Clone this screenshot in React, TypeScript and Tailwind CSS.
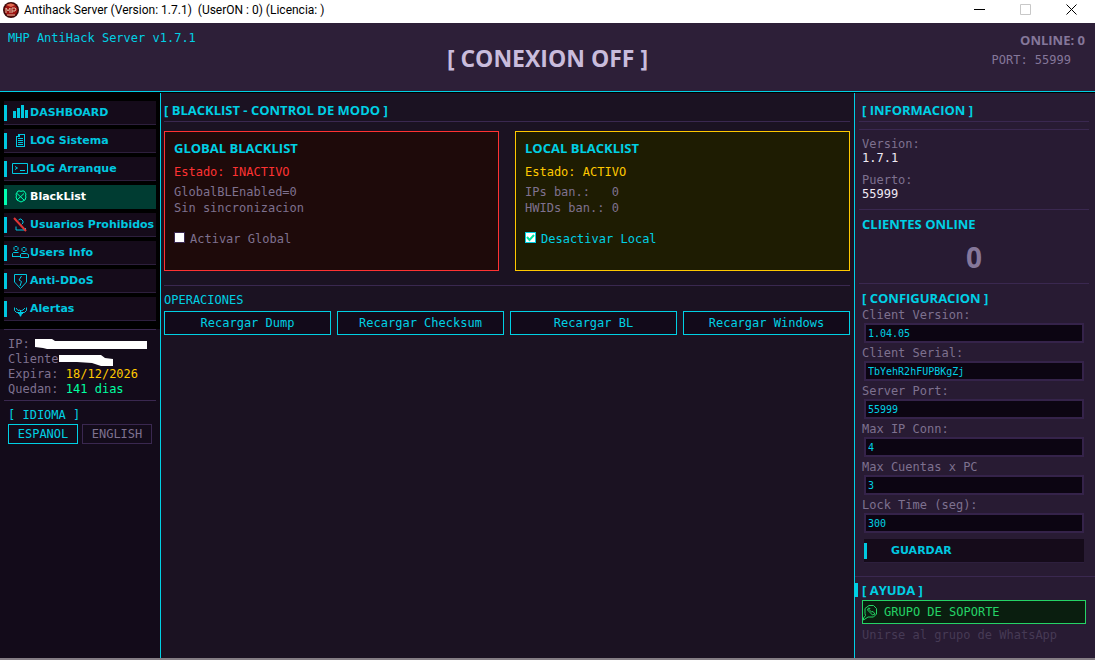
import React, { useState } from 'react';

const NAV_ITEMS = [
  { id: 'dashboard', label: 'DASHBOARD' },
  { id: 'log', label: 'LOG Sistema' },
  { id: 'boot', label: 'LOG Arranque' },
  { id: 'blacklist', label: 'BlackList' },
  { id: 'banned', label: 'Usuarios Prohibidos' },
  { id: 'users', label: 'Users Info' },
  { id: 'ddos', label: 'Anti-DDoS' },
  { id: 'alerts', label: 'Alertas' },
];

const CONFIG_FIELDS = [
  { id: 'clientVersion', label: 'Client Version:', value: '1.04.05' },
  { id: 'clientSerial', label: 'Client Serial:', value: 'TbYehR2hFUPBKgZj' },
  { id: 'serverPort', label: 'Server Port:', value: '55999' },
  { id: 'maxIp', label: 'Max IP Conn:', value: '4' },
  { id: 'maxAccounts', label: 'Max Cuentas x PC', value: '3' },
  { id: 'lockTime', label: 'Lock Time (seg):', value: '300' },
];

const OPERATIONS = ['Recargar Dump', 'Recargar Checksum', 'Recargar BL', 'Recargar Windows'];

const NavIcon: React.FC<{ id: string }> = ({ id }) => (
  <svg
    width="18"
    height="18"
    viewBox="0 0 18 18"
    fill="none"
    stroke="currentColor"
    strokeWidth="1"
    className="shrink-0"
    aria-hidden="true"
  >
    {id === 'dashboard' && (
      <path d="M1 7h3v7H1zM5 4h3v10H5zM9 1h3v13H9zM13 6h3v8h-3z" fill="currentColor" stroke="none" />
    )}
    {id === 'log' && (
      <path d="M6.500 2.500h6v12h-8v-10h2zM4.500 4.500h3v-2M6 6.500h5M6 8.500h5M6 10.500h5M6 12.500h5" shapeRendering="crispEdges" />
    )}
    {id === 'boot' && <path d="M.5 3.500h15v10H.5zM3 6.500l2.500 1.500L3 9.500M8 10.500h5" />}
    {id === 'blacklist' && (
      <path d="M6 3h2l1 .5 1-.5h2l2 3-.5 2 .5 1-1 3-2 1-2 1-2-1-2-1-1-3 .5-1-.5-2zM5 5.500l7 6.500M12 5.500L5 12" />
    )}
    {id === 'banned' && (
      <>
        <path d="M6.500 4l1.500-1h1l2 2v2L9.500 8.500M4 10.500v3.500h9.500v-2" />
        <path d="M2 2l12 13" stroke="#e03535" strokeWidth="2" />
      </>
    )}
    {id === 'users' && (
      <path d="M3 2.500h2l1 1v2l-1 1H3l-1-1v-2zM11 3.500h2l1 1v2l-1 1h-2l-1-1v-2zM.5 13V9.500l1-1h5M.5 12.500h8M8.500 13.500v-3l1-1h5l2 1v3z" />
    )}
    {id === 'ddos' && <path d="M2.500 2.500h12v7.500l-6 6.500-6-6.500zM9.500 4L7 8l2.500 1.500L8 14" />}
    {id === 'alerts' && (
      <>
        <path d="M2.500 7.500v3l2 2h8l2-2v-3M4 8l2 2.500 2-.5 1 1 2-1 2-2M8.500 10v3" />
        <path d="M6 12h5v2H10l-1 2.500H8L7 14H6z" fill="currentColor" stroke="none" />
      </>
    )}
  </svg>
);

const SectionTitle: React.FC<{ children: React.ReactNode }> = ({ children }) => (
  <h2 className="text-[13px] leading-4 font-bold font-['Open_Sans',sans-serif] text-[#00d0e4]">{children}</h2>
);

const Divider: React.FC = () => <div className="h-px bg-[#3a2850]" />;

const TitleBar: React.FC = () => (
  <div className="h-[23px] bg-white text-black flex items-center justify-between font-[Roboto,sans-serif]">
    <div className="flex items-center gap-[5px] pl-[3px] pb-1">
      <svg width="16" height="16" viewBox="0 0 16 16" aria-hidden="true">
        <circle cx="8" cy="8" r="8" fill="#3a0a0a" />
        <circle cx="8" cy="8" r="6.500" fill="#a01412" />
        <path d="M3 3q5-3 9 0l-4 2z" fill="#e06a50" />
        <path d="M3 6v5M3 6l2 3 2-3v5M9 11V6h3l1 1-1 2H9M4 13h8" stroke="#d9b9a0" fill="none" />
      </svg>
      <span className="text-xs leading-4 whitespace-pre">
        Antihack Server (Version: 1.7.1)  (UserON : 0) (Licencia: )
      </span>
    </div>
    <div className="flex items-center gap-[35px] pr-[18px] pb-1">
      <button aria-label="Minimizar">
        <svg width="11" height="11" viewBox="0 0 11 11" stroke="#000" shapeRendering="crispEdges"><path d="M0 5.500h11" /></svg>
      </button>
      <button aria-label="Maximizar">
        <svg width="11" height="11" viewBox="0 0 11 11" stroke="#c8c8c8" fill="none"><path d="M.5.500h10v10H.5z" /></svg>
      </button>
      <button aria-label="Cerrar">
        <svg width="11" height="11" viewBox="0 0 11 11" stroke="#000"><path d="M.5.500l10 10M10.500.500l-10 10" /></svg>
      </button>
    </div>
  </div>
);

const Sidebar: React.FC = () => {
  const [active, setActive] = useState('blacklist');
  const [lang, setLang] = useState('ESPANOL');

  return (
    <aside className="w-[161px] shrink-0 bg-black border-r border-[#00d0e4] flex flex-col">
      <nav className="flex flex-col gap-1 px-1 pt-2 pb-2">
        {NAV_ITEMS.map((item) => (
          <button
            key={item.id}
            onClick={() => setActive(item.id)}
            className={`h-6 flex items-center text-left text-[11px] font-bold whitespace-nowrap font-['DejaVu_Sans',sans-serif] border-b ${
              active === item.id
                ? 'bg-[#003c32] border-[#003c32] text-[#00ffb0]'
                : 'bg-[#150b1a] border-[#2d1f3d] text-[#00c8e0]'
            }`}
          >
            <span className="w-[3px] h-4 bg-current mr-[5px]" />
            <NavIcon id={item.id} />
            <span className={`pt-0.5 ${active === item.id ? 'text-white' : ''}`}>{item.label}</span>
          </button>
        ))}
      </nav>

      <div className="flex-1 bg-[#130b1a] px-1">
        <Divider />
        <div className="pl-1 pt-[7px] pb-[3px] leading-[15px] text-[#7e718f]">
          <div className="flex items-center">
            IP:
            <svg width="112" height="12" viewBox="0 0 112 12" className="ml-[5px]" aria-hidden="true">
              <path d="M0 0h17l3 2h92v8H12l-4-1-8-1z" fill="#fff" />
            </svg>
          </div>
          <div className="flex items-center">
            Cliente
            <svg width="55" height="12" viewBox="0 0 55 12" aria-hidden="true">
              <path d="M0 1h42l4 3 8 1v7H42l-9-3-15-1H0z" fill="#fff" />
            </svg>
          </div>
          <div>Expira: <span className="text-[#ffc800]">18/12/2026</span></div>
          <div>Quedan: <span className="text-[#00ffa0]">141 dias</span></div>
        </div>
        <Divider />
        <div className="pl-1 pt-1.5">
          <div className="leading-4 text-[#00d0e4]">[ IDIOMA ]</div>
          <div className="flex gap-1 mt-px">
            {['ESPANOL', 'ENGLISH'].map((name) => (
              <button
                key={name}
                onClick={() => setLang(name)}
                className={`w-[70px] h-5 border ${
                  lang === name ? 'border-[#00d0e4] text-[#00d0e4]' : 'border-[#3a2850] text-[#7e718f]'
                }`}
              >
                {name}
              </button>
            ))}
          </div>
        </div>
      </div>
    </aside>
  );
};

const MainPanel: React.FC = () => {
  const [globalOn, setGlobalOn] = useState(false);
  const [localOn, setLocalOn] = useState(true);

  return (
    <main className="flex-1 min-w-0 bg-[#1b1222] pl-[3px] pr-1 pt-[9px]">
      <SectionTitle>[ BLACKLIST - CONTROL DE MODO ]</SectionTitle>
      <div className="mt-[3px] mb-[9px]"><Divider /></div>

      <div className="grid grid-cols-2 gap-4">
        <section className="h-[140px] border border-[#ff3232] bg-[#1e0a0a] px-[9px] pt-2 text-[#7e718f]">
          <SectionTitle>GLOBAL BLACKLIST</SectionTitle>
          <p className="mt-2 leading-4 text-[#ff3232]">Estado: INACTIVO</p>
          <p className="mt-1 leading-4">GlobalBLEnabled=0</p>
          <p className="leading-4">Sin sincronizacion</p>
          <label className="mt-[15px] flex items-center gap-[5px] leading-4">
            <input
              type="checkbox"
              checked={globalOn}
              onChange={() => setGlobalOn(!globalOn)}
              className="appearance-none size-[11px] bg-white border border-[#3a2850] mb-1"
            />
            Activar Global
          </label>
        </section>

        <section className="h-[140px] border border-[#ffc800] bg-[#1e1c02] px-[9px] pt-2 text-[#7e718f]">
          <SectionTitle>LOCAL BLACKLIST</SectionTitle>
          <p className="mt-2 leading-4 text-[#ffc800]">Estado: ACTIVO</p>
          <p className="mt-1 leading-4 whitespace-pre">IPs ban.:   0</p>
          <p className="leading-4">HWIDs ban.: 0</p>
          <label className="mt-[15px] flex items-center gap-[5px] leading-4 text-[#00d0e4]">
            <span className="relative size-[11px] mb-1">
              <input
                type="checkbox"
                checked={localOn}
                onChange={() => setLocalOn(!localOn)}
                className="block appearance-none size-[11px] bg-white border border-[#00d0e4]"
              />
              {localOn && (
                <svg width="11" height="11" viewBox="0 0 11 11" className="absolute inset-0 pointer-events-none" aria-hidden="true">
                  <path d="M2 5l2.500 3L9 3" stroke="#00e6a0" strokeWidth="2" fill="none" />
                </svg>
              )}
            </span>
            Desactivar Local
          </label>
        </section>
      </div>

      <div className="mt-3.5"><Divider /></div>
      <h3 className="mt-1.5 mb-[3px] leading-4 text-[#00d0e4]">OPERACIONES</h3>
      <div className="grid grid-cols-4 gap-1.5">
        {OPERATIONS.map((name) => (
          <button key={name} className="h-6 border border-[#00d0e4] bg-[#120a1a] text-[#00d0e4]">
            {name}
          </button>
        ))}
      </div>
    </main>
  );
};

const InfoPanel: React.FC = () => {
  const [config, setConfig] = useState<Record<string, string>>(
    Object.fromEntries(CONFIG_FIELDS.map((f) => [f.id, f.value]))
  );

  return (
    <aside className="w-[241px] shrink-0 bg-[#281b33] border-l border-[#00d0e4] text-[#7e718f]">
      <div className="pl-1 pr-1.5 pt-[9px]">
        <div className="pl-[3px]"><SectionTitle>[ INFORMACION ]</SectionTitle></div>
        <div className="mt-[3px] flex flex-col gap-[7px]">
          <Divider />
          <Divider />
        </div>
        <dl className="pl-[3px] pt-[7px] pb-2 leading-3.5">
          <dt>Version:</dt>
          <dd className="text-[#f0eaf5]">1.7.1</dd>
          <dt className="mt-2">Puerto:</dt>
          <dd className="text-[#f0eaf5]">55999</dd>
        </dl>
        <Divider />
        <div className="pl-[3px] pt-1.5"><SectionTitle>CLIENTES ONLINE</SectionTitle></div>
        <div className="h-[51px] flex items-center justify-center text-[28px] font-bold font-['Open_Sans',sans-serif] text-[#85779a]">0</div>
        <Divider />
        <div className="pl-[3px] pt-1.5"><SectionTitle>[ CONFIGURACION ]</SectionTitle></div>
      </div>

      <form className="pl-[7px] pr-[11px] pt-px" onSubmit={(e) => e.preventDefault()}>
        {CONFIG_FIELDS.map((field) => (
          <div key={field.id} className="mb-0.5">
            <label htmlFor={field.id} className="block h-4 leading-4">{field.label}</label>
            <div className="pl-0.5">
              <input
                id={field.id}
                value={config[field.id]}
                onChange={(e) => setConfig({ ...config, [field.id]: e.target.value })}
                className="block w-full h-5 px-0.5 border-2 border-[#35234a] bg-[#0c0512] text-[10px] text-[#00d0e4] outline-none"
              />
            </div>
          </div>
        ))}
        <div className="pl-0.5 pt-1">
          <button className="w-full h-6 flex items-center bg-[#150b1a] border-b border-[#2d1f3d] text-[#00c8e0] text-[11px] font-bold font-['DejaVu_Sans',sans-serif]">
            <span className="w-[3px] h-4 bg-current mr-6" />
            <span className="pt-0.5">GUARDAR</span>
          </button>
        </div>
      </form>

      <div className="mt-[13px]"><Divider /></div>
      <div className="pt-[5px] flex items-center">
        <span className="w-[3px] h-3.5 bg-[#00d0e4] mr-1" />
        <SectionTitle>[ AYUDA ]</SectionTitle>
      </div>
      <div className="pl-[7px] pr-[9px] pt-0.5">
        <button className="w-full h-6 flex items-center gap-1 border border-[#25d366] bg-[#0a1e0f] text-[#25d366]">
          <svg width="17" height="18" viewBox="0 0 17 18" fill="none" stroke="currentColor" aria-hidden="true">
            <path d="M6 2.500h4.500l3 3v5.500l-3 3H5L.5 17v-2l2-2.500-.5-2V5.500z" />
            <path d="M5.500 5L4.500 7l5 5 2.500-1-2-2.500-1.500.500-2.500-2.500 1-1z" />
          </svg>
          GRUPO DE SOPORTE
        </button>
        <p className="mt-[3px] leading-4 text-[#463a55]">Unirse al grupo de WhatsApp</p>
      </div>
    </aside>
  );
};

const App: React.FC = () => (
  <div className="min-h-screen flex flex-col bg-black text-xs font-['DejaVu_Sans_Mono',monospace]">
    <TitleBar />
    <header className="h-[69px] bg-[#2d1f38] border-b border-[#00d0e4] px-2 grid grid-cols-3">
      <p className="pt-[7px] leading-4 text-[#00d0e4] whitespace-nowrap">MHP AntiHack Server v1.7.1</p>
      <h1 className="self-center pt-0.5 text-center text-[23px] font-bold whitespace-nowrap font-['Open_Sans',sans-serif] text-[#c9bcdc]">[ CONEXION OFF ]</h1>
      <div className="pt-[9px] pr-0.5 text-right text-[#85779a]">
        <p className="text-[13px] leading-4 font-bold font-['Open_Sans',sans-serif]">ONLINE: 0</p>
        <p className="mt-1 pr-3.5 leading-4">PORT: 55999</p>
      </div>
    </header>
    <div className="flex-1 flex border-t border-black">
      <Sidebar />
      <MainPanel />
      <InfoPanel />
    </div>
    <div className="h-0.5 bg-[#857e85]" />
  </div>
);

export default App;
